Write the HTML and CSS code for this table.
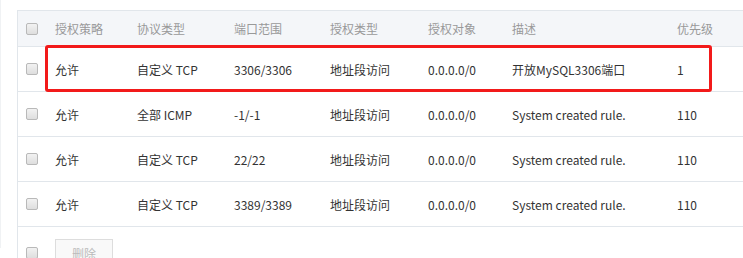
FILE: index.html
```html
<!DOCTYPE html>
<html lang="zh-CN">
<head>
<meta charset="utf-8">
<link rel="stylesheet" href="styles.css">
</head>
<body>
<div class="page">
  <div class="table-wrap">
    <table class="rules">
      <colgroup>
        <col class="c-cb"><col class="c-1"><col class="c-2"><col class="c-3"><col class="c-4"><col class="c-5"><col class="c-6"><col class="c-7">
      </colgroup>
      <thead>
        <tr>
          <th><span class="cb"></span></th>
          <th>授权策略</th><th>协议类型</th><th>端口范围</th><th>授权类型</th><th>授权对象</th><th>描述</th><th>优先级</th>
        </tr>
      </thead>
      <tbody>
        <tr>
          <td><span class="cb"></span></td>
          <td>允许</td><td>自定义 TCP</td><td>3306/3306</td><td>地址段访问</td><td>0.0.0.0/0</td><td>开放MySQL3306端口</td><td>1</td>
        </tr>
        <tr>
          <td><span class="cb"></span></td>
          <td>允许</td><td>全部 ICMP</td><td>-1/-1</td><td>地址段访问</td><td>0.0.0.0/0</td><td>System created rule.</td><td>110</td>
        </tr>
        <tr>
          <td><span class="cb"></span></td>
          <td>允许</td><td>自定义 TCP</td><td>22/22</td><td>地址段访问</td><td>0.0.0.0/0</td><td>System created rule.</td><td>110</td>
        </tr>
        <tr>
          <td><span class="cb"></span></td>
          <td>允许</td><td>自定义 TCP</td><td>3389/3389</td><td>地址段访问</td><td>0.0.0.0/0</td><td>System created rule.</td><td>110</td>
        </tr>
      </tbody>
    </table>
    <div class="highlight"></div>
    <div class="footer">
      <span class="cb-cell"><span class="cb"></span></span>
      <button class="btn" type="button">删除</button>
    </div>
  </div>
</div>
</body>
</html>
```
FILE: styles.css
```css
html, body {
  margin: 0;
  padding: 0;
  background: #fff;
  overflow: hidden;
}
body {
  width: 743px;
  height: 258px;
  font-family: "Noto Sans CJK SC", "Noto Sans", sans-serif;
  font-size: 12px;
  color: #333;
}
.page {
  padding: 10px 0 0 16px;
  border-left: 1px solid #f0f2f4;
  height: 248px;
  box-sizing: border-box;
}
.table-wrap {
  position: relative;
  width: 760px;
  border-left: 1px solid #e1e6eb;
  height: 300px;
}
.rules {
  border-collapse: collapse;
  table-layout: fixed;
  width: 760px;
}
.c-cb { width: 37px; }
.c-1 { width: 82px; }
.c-2 { width: 97px; }
.c-3 { width: 96px; }
.c-4 { width: 98px; }
.c-5 { width: 84px; }
.c-6 { width: 165px; }
.c-7 { width: 101px; }
.rules th, .rules td {
  padding: 0;
  text-align: left;
  white-space: nowrap;
  font-weight: normal;
  border-bottom: 1px solid #e1e6eb;
  vertical-align: middle;
}
.rules thead th {
  height: 35px;
  background: #f4f6f9;
  color: #999;
  border-top: 1px solid #e1e6eb;
}
.rules tbody td {
  height: 44px;
}
.rules th:first-child, .rules td:first-child {
  padding-left: 8px;
}
.cb {
  display: block;
  width: 10px;
  height: 10px;
  border: 1px solid #b9b9b9;
  border-radius: 2px;
  background: linear-gradient(#f2f2f2, #dedede);
}
.highlight {
  position: absolute;
  left: 27px;
  top: 35px;
  width: 661px;
  height: 41px;
  border: 3px solid #f21a1a;
  border-radius: 3px;
  pointer-events: none;
}
.footer {
  display: flex;
  align-items: center;
  padding-top: 12px;
}
.cb-cell {
  width: 29px;
  padding-left: 8px;
}
.btn {
  width: 58px;
  height: 28px;
  border: 1px solid #ddd;
  background: #f9f9f9;
  color: #bbb;
  font-family: inherit;
  font-size: 12px;
  padding: 0;
}
```
